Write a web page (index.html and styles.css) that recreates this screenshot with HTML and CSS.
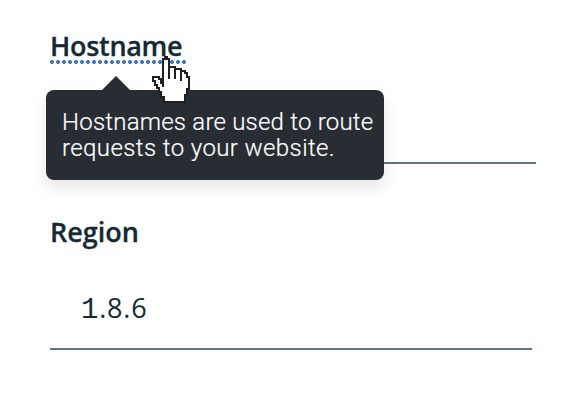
FILE: index.html
```html
<!DOCTYPE html>
<html lang="en">
<head>
<meta charset="utf-8">
<title>Hostname</title>
<link rel="stylesheet" href="styles.css">
</head>
<body>
<main class="form">
  <section class="field field-host">
    <h2 class="label"><span class="term">Hostname</span></h2>
    <div class="tooltip" role="tooltip"><span class="line line-one">Hostnames are used to route</span><span class="line line-two">requests to your website.</span></div>
    <svg class="cursor" viewBox="150 54 42 52" fill="none" stroke="#231f20" stroke-width="2" shape-rendering="crispEdges">
      <path fill="#fff" d="M163 83V59H165V57H167V59H169V67H175V69H181V71H185V73H187V77H189V89H187V95H185V102H164V97H161V92H159V88H157V85H155V81H153V77H159V79H161V83Z"/>
      <path d="M163 82V87M169 66V79M175 68V79M181 70V81"/>
    </svg>
  </section>
  <section class="field field-region">
    <h2 class="label label-region">Region</h2>
    <div class="value"><span class="one">1</span>.8.6</div>
  </section>
</main>
</body>
</html>
```
FILE: styles.css
```css
body {
  margin: 0;
  background: #fff;
  color: #152935;
  font-family: "Open Sans", sans-serif;
}

.form {
  padding: 28px 44px 0 50px;
}

.field {
  position: relative;
  box-sizing: border-box;
  border-bottom: 2px solid #607481;
}

.field-host {
  height: 136px;
}

.field-region {
  height: 136px;
  margin: 50px 4px 0 0;
}

.label {
  margin: 0;
  font-size: 27px;
  font-weight: 600;
  line-height: 36px;
  letter-spacing: -0.3px;
  -webkit-text-stroke: 0.3px #152935;
}

.label-region {
  letter-spacing: 0;
}

.term {
  display: inline-block;
  height: 32px;
  width: 136px;
  background: radial-gradient(circle at 2px 2px, #4178be 1.7px, transparent 2.3px) 0 100% / 6px 4px repeat-x;
  padding-bottom: 4px;
}

.tooltip {
  position: absolute;
  top: 62px;
  left: -4px;
  box-sizing: border-box;
  width: 338px;
  height: 90px;
  padding: 19px 16px;
  border-radius: 8px;
  background: #272d33;
  color: #fff;
  box-shadow: 0 8px 16px rgba(0, 0, 0, 0.1);
  font: 300 24px/26px Roboto, sans-serif;
  -webkit-text-stroke: 0.2px #fff;
}

.tooltip::before {
  content: "";
  position: absolute;
  top: -14px;
  left: 56px;
  border: solid transparent;
  border-width: 0 14px 14px;
  border-bottom-color: #272d33;
}

.line {
  display: block;
  white-space: nowrap;
}

.line-one {
  letter-spacing: 0.22px;
}

.line-two {
  letter-spacing: 0.4px;
}

.cursor {
  position: absolute;
  top: 26px;
  left: 100px;
  width: 42px;
  height: 52px;
}

.value {
  padding: 40px 0 0 32px;
  font-size: 27px;
  line-height: 36px;
  letter-spacing: 0.8px;
}

.one {
  font-family: "Liberation Mono", monospace;
  font-size: 29px;
  line-height: 1;
  margin-left: -1px;
}
```
